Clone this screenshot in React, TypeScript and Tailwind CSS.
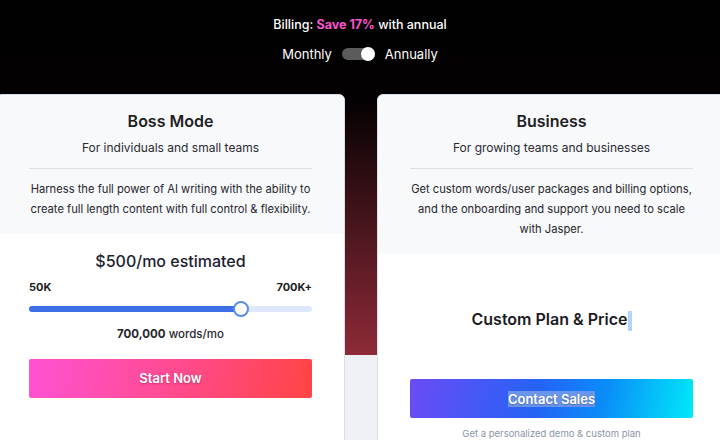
import React from 'react';

const font = { fontFamily: 'Inter, "Noto Sans", sans-serif' };

function PlanHeader({ title, subtitle, children }: { title: string; subtitle: string; children: React.ReactNode }) {
  return (
    <div className="bg-[#f8f9fb] px-[32px] pt-[14px] pb-[15px] text-center">
      <h2 className="text-[16px] leading-6 font-semibold text-[#1f1f24]">{title}</h2>
      <p className="mt-[5px] text-[12px] leading-5 text-[#2a2a30]">{subtitle}</p>
      <div className="mt-[10px] h-px bg-[#dcdfe5]" />
      <p className="mt-[10px] text-[11.2px] leading-5 text-[#26262c]">{children}</p>
    </div>
  );
}

function Slider({ percent }: { percent: number }) {
  return (
    <div className="relative mt-[6px] h-4">
      <div className="absolute left-0 right-0 top-[5px] h-[6px] rounded-full bg-[#dfe8fa]" />
      <div className="absolute left-0 top-[5px] h-[6px] rounded-l-full bg-[#3d6ee6]" style={{ width: `${percent}%` }} />
      <div
        className="absolute top-0 h-4 w-4 -translate-x-1/2 rounded-full border-2 border-[#5b8def] bg-white"
        style={{ left: `${percent}%` }}
      />
    </div>
  );
}

export default function App() {
  return (
    <div
      className="w-[720px] h-[440px] overflow-hidden bg-[linear-gradient(180deg,#000_0px,#040102_100px,#8e2a38_355px,#eef0f5_355px)]"
      style={font}
    >
      {/* Billing toggle */}
      <div className="pt-[15px] text-center text-white">
        <p className="text-[12.5px] leading-5 font-medium">
          Billing: <span className="font-bold text-[#ff55d2]">Save 17%</span> with annual
        </p>
        <div className="mt-[9px] flex items-center justify-center gap-[10px] text-[13px] leading-5 font-normal">
          <span>Monthly</span>
          <div className="relative h-3 w-[33px] rounded-full bg-[#5b5b5b]">
            <div className="absolute right-0 top-[-1px] h-[14px] w-[14px] rounded-full bg-white" />
          </div>
          <span>Annually</span>
        </div>
      </div>

      {/* Plans */}
      <div className="mt-[30px] flex justify-center gap-8 pl-[2px]">
        <div className="w-[349px] h-[380px] shrink-0 overflow-hidden rounded-md border border-[#d9dee8] bg-white">
          <PlanHeader title="Boss Mode" subtitle="For individuals and small teams">
            Harness the full power of AI writing with the ability to create full length content with full control &amp; flexibility.
          </PlanHeader>
          <div className="px-[32px] pt-[15px]">
            <p className="text-center text-[16px] leading-6 font-medium text-[#1c2130]">$500/mo estimated</p>
            <div className="mt-[6px] flex justify-between text-[11px] leading-4 font-bold text-[#1c1c22]">
              <span>50K</span>
              <span>700K+</span>
            </div>
            <Slider percent={75} />
            <p className="mt-[9px] text-center text-[11.5px] leading-4 font-medium text-[#26262c]">
              <span className="font-bold">700,000</span> words/mo
            </p>
            <button className="mt-[17px] block h-[39px] w-full rounded-[2px] bg-[linear-gradient(100deg,#ff52d4_0%,#ff4a8a_55%,#ff4444_100%)] text-[13px] font-semibold text-white [text-shadow:0_1px_2px_rgba(0,0,0,0.3)]">
              Start Now
            </button>
          </div>
        </div>

        <div className="w-[349px] h-[380px] shrink-0 overflow-hidden rounded-md border border-[#d9dee8] bg-white">
          <PlanHeader title="Business" subtitle="For growing teams and businesses">
            Get custom words/user packages and billing options, and the onboarding and support you need to scale with Jasper.
          </PlanHeader>
          <div className="px-[32px] pt-[53px]">
            <p className="text-center text-[16px] leading-6 font-semibold text-[#1c1c22]">
              Custom Plan &amp; Price<span className="inline-block h-5 w-[4px] align-middle bg-[#b4d3fb]" />
            </p>
            <button className="mt-[48px] flex h-[39px] w-full items-center justify-center rounded-[2px] bg-[linear-gradient(100deg,#6b4bf5_0%,#2563f5_45%,#0a8cf8_68%,#00e9fa_100%)] text-[13px] font-semibold text-white [text-shadow:0_1px_2px_rgba(0,0,0,0.3)]">
              <span className="bg-[#6a95ec] leading-4">Contact Sales</span>
            </button>
            <p className="mt-[8px] text-center text-[9.5px] leading-4 text-[#8a94a6]">Get a personalized demo &amp; custom plan</p>
          </div>
        </div>
      </div>
    </div>
  );
}
